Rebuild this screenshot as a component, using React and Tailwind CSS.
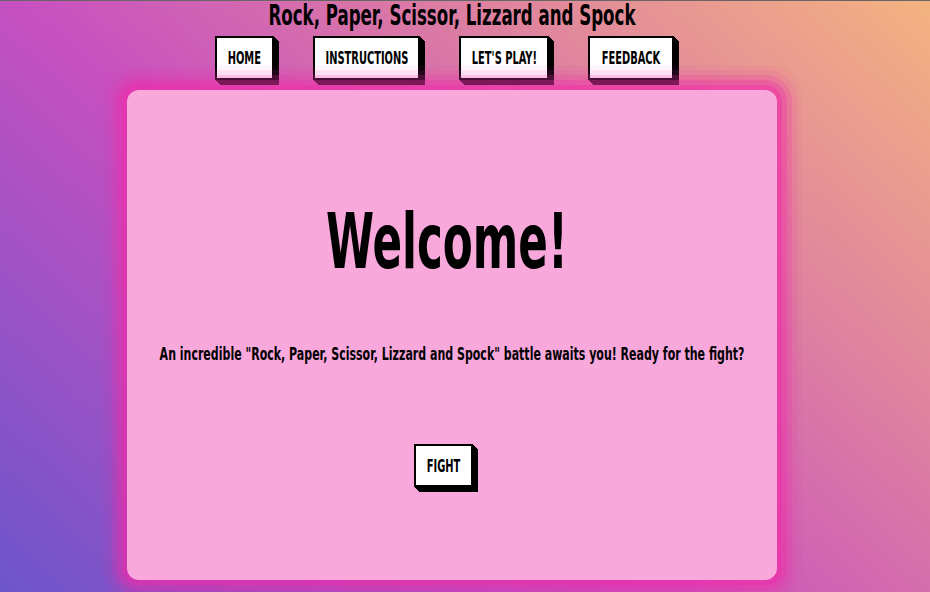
import React from "react";

const navItems = [
  { label: "HOME", w: "w-[59px]" },
  { label: "INSTRUCTIONS", w: "w-[107px]" },
  { label: "LET'S PLAY!", w: "w-[90px]" },
  { label: "FEEDBACK", w: "w-[86px]" },
];

const boxShadow =
  "shadow-[1px_1px_0_0_#000,2px_2px_0_0_#000,3px_3px_0_0_#000,4px_4px_0_0_#000,5px_5px_0_0_#000]";

const NavButton = ({ label, w }) => {
  return (
    <a
      className={`${w} h-[44px] flex items-center justify-center bg-white border-2 border-black text-black text-[18px] font-bold leading-none whitespace-nowrap ${boxShadow}`}
    >
      <span className="inline-block scale-x-[0.61]">{label}</span>
    </a>
  );
};

export default function App() {
  return (
    <div className="w-[930px] h-[592px] overflow-hidden border-t border-[#666] bg-[linear-gradient(43deg,#6d55cb_0%,#c850c0_42%,#f4b380_100%)] font-['DejaVu_Sans_Condensed','DejaVu_Sans',sans-serif]">
      <div className="w-[904px] flex flex-col items-center">
        <h1 className="text-[28px] font-bold leading-[30px] text-black whitespace-nowrap">
          <span className="inline-block scale-x-[0.66]">Rock, Paper, Scissor, Lizzard and Spock</span>
        </h1>
        <nav className="mt-[5px] flex gap-[39px] pr-[15px]">
          {navItems.map((item) => (
            <NavButton key={item.label} label={item.label} w={item.w} />
          ))}
        </nav>
        <main className="mt-[10px] w-[650px] h-[490px] rounded-[12px] bg-[#f9a8dc] flex flex-col items-center shadow-[0_0_0_5px_rgba(240,46,170,0.4),0_0_0_10px_rgba(240,46,170,0.3),0_0_0_15px_rgba(240,46,170,0.2),0_0_0_20px_rgba(240,46,170,0.1),0_0_0_25px_rgba(240,46,170,0.05)]">
          <h2 className="mt-[113px] mr-[10px] text-[77px] font-bold leading-none text-black whitespace-nowrap">
            <span className="inline-block scale-x-[0.63]">Welcome!</span>
          </h2>
          <p className="mt-[60px] text-[18px] leading-[27px] font-bold text-black whitespace-nowrap">
            <span className="inline-block scale-x-[0.68]">
              An incredible "Rock, Paper, Scissor, Lizzard and Spock" battle awaits you! Ready for the fight?
            </span>
          </p>
          <button
            className={`mt-[77px] mr-[17px] w-[59px] h-[43px] flex items-center justify-center bg-white border-2 border-black text-[18px] font-bold leading-none text-black ${boxShadow}`}
          >
            <span className="inline-block scale-x-[0.61]">FIGHT</span>
          </button>
        </main>
      </div>
    </div>
  );
}
